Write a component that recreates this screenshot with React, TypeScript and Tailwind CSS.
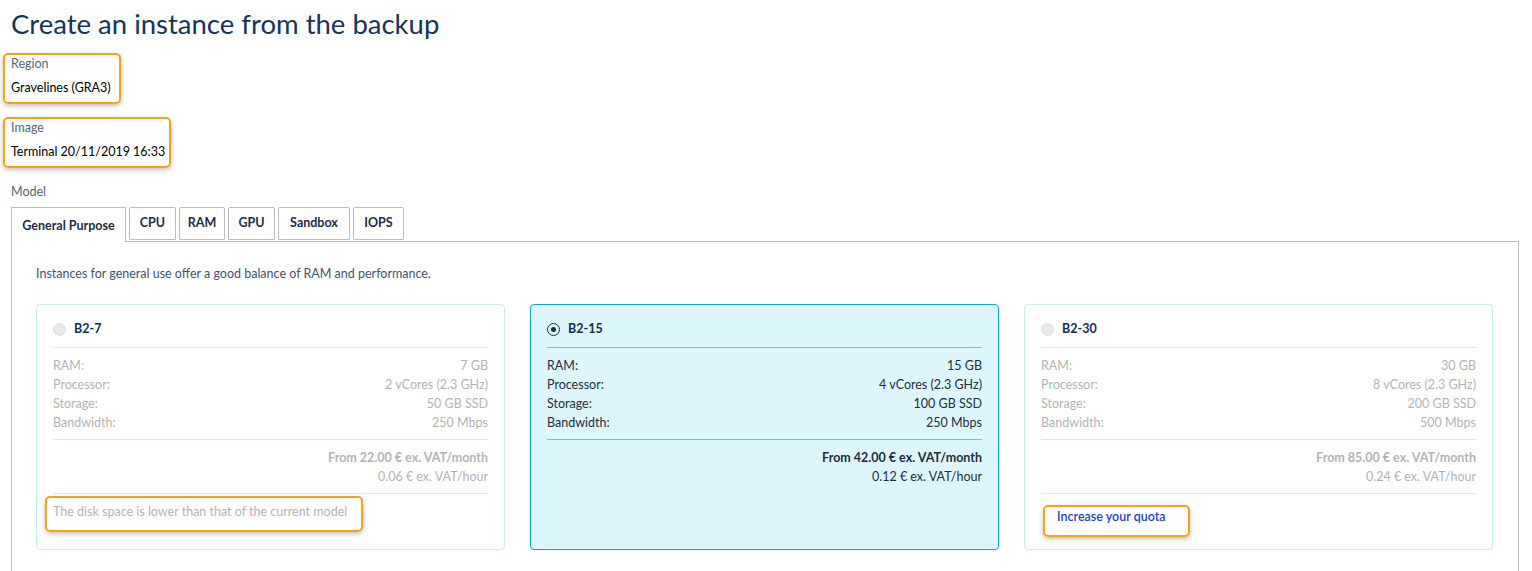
import React from 'react';

type Model = {
  name: string;
  ram: string;
  cpu: string;
  storage: string;
  bandwidth: string;
  month: string;
  hour: string;
  selected?: boolean;
  note?: 'disk' | 'quota';
};

const models: Model[] = [
  { name: 'B2-7', ram: '7 GB', cpu: '2 vCores (2.3 GHz)', storage: '50 GB SSD', bandwidth: '250 Mbps', month: 'From 22.00 € ex. VAT/month', hour: '0.06 € ex. VAT/hour', note: 'disk' },
  { name: 'B2-15', ram: '15 GB', cpu: '4 vCores (2.3 GHz)', storage: '100 GB SSD', bandwidth: '250 Mbps', month: 'From 42.00 € ex. VAT/month', hour: '0.12 € ex. VAT/hour', selected: true },
  { name: 'B2-30', ram: '30 GB', cpu: '8 vCores (2.3 GHz)', storage: '200 GB SSD', bandwidth: '500 Mbps', month: 'From 85.00 € ex. VAT/month', hour: '0.24 € ex. VAT/hour', note: 'quota' },
];

const tabs = [
  { label: 'CPU', w: 'w-[47px]' },
  { label: 'RAM', w: 'w-[46px]' },
  { label: 'GPU', w: 'w-[47px]' },
  { label: 'Sandbox', w: 'w-[72px]' },
  { label: 'IOPS', w: 'w-[51px]' },
];

const Highlight: React.FC<{ className?: string; children: React.ReactNode }> = ({ className = '', children }) => (
  <div className={`border-2 border-[#f5a31a] rounded-[5px] shadow-[0_2px_5px_rgba(0,0,0,0.25)] ${className}`}>
    {children}
  </div>
);

const ModelCard: React.FC<{ m: Model }> = ({ m }) => {
  const muted = !m.selected;
  const text = muted ? 'text-[#b3b3b3]' : 'text-[#1d2d44]';
  const line = m.selected ? 'border-[#4fcfe8]' : 'border-[#cdeef6]';
  return (
    <div
      className={`h-[246px] rounded-[4px] border px-[16px] ${
        m.selected ? 'bg-[#ddf5fc] border-[#0fa5c4]' : 'bg-white border-[#c9ecf5]'
      }`}
    >
      <div className={`flex items-center gap-[8px] h-[43px] pt-[7px] border-b ${line}`}>
        {m.selected ? (
          <span className="w-[13px] h-[13px] rounded-full border-[1.5px] border-[#1d2d44] flex items-center justify-center">
            <span className="w-[5px] h-[5px] rounded-full bg-[#1d2d44]" />
          </span>
        ) : (
          <span className="w-[13px] h-[13px] rounded-full bg-[#e8e8e8] border border-[#e0e0e0]" />
        )}
        <span className="text-[12.5px] font-bold text-[#122d4f]">{m.name}</span>
      </div>
      <div className={`pt-[8px] pb-[7px] border-b ${line} text-[12.5px] leading-[19px] ${text}`}>
        {[
          ['RAM:', m.ram],
          ['Processor:', m.cpu],
          ['Storage:', m.storage],
          ['Bandwidth:', m.bandwidth],
        ].map(([k, v]) => (
          <div key={k} className="flex justify-between">
            <span>{k}</span>
            <span>{v}</span>
          </div>
        ))}
      </div>
      <div className={`pt-[8px] pb-[7px] text-right text-[12.5px] leading-[19px] ${text} ${m.note ? `border-b ${line}` : ''}`}>
        <div className="font-bold">{m.month}</div>
        <div>{m.hour}</div>
      </div>
      {m.note === 'disk' && (
        <Highlight className="mt-[2px] -ml-[8px] w-[318px] h-[36px] pl-[6px] pt-0">
          <span className="text-[12.5px] leading-[26px] text-[#b3b3b3]">The disk space is lower than that of the current model</span>
        </Highlight>
      )}
      {m.note === 'quota' && (
        <Highlight className="mt-[11px] ml-[2px] w-[147px] h-[32px] pl-[12px] pt-0">
          <span className="block text-[12.5px] leading-[20px] font-semibold text-[#2346c0]">Increase your quota</span>
        </Highlight>
      )}
    </div>
  );
};

export default function App() {
  return (
    <div className="min-h-screen bg-white pl-[11px] pr-[13px] pt-[6px] text-[#1d2d44]" style={{ fontFamily: 'Lato, "Open Sans", sans-serif' }}>
      <h1 className="text-[27.5px] leading-[36px] font-normal text-[#173459]">Create an instance from the backup</h1>

      <Highlight className="mt-[11px] -ml-[8px] w-[118px] h-[51px] pl-[6px] pt-0">
        <div className="text-[12.5px] leading-[18px] text-[#56647a]">Region</div>
        <div className="mt-[6px] text-[12.5px] leading-[18px] text-black">Gravelines (GRA3)</div>
      </Highlight>

      <Highlight className="mt-[13px] -ml-[8px] w-[168px] h-[51px] pl-[6px] pt-0">
        <div className="text-[12.5px] leading-[18px] text-[#56647a]">Image</div>
        <div className="mt-[6px] text-[12.5px] leading-[18px] text-black">Terminal 20/11/2019 16:33</div>
      </Highlight>

      <div className="mt-[15px] text-[12.5px] leading-[18px] text-[#56647a]">Model</div>

      <div className="mt-[6px] flex items-end gap-[3px] relative z-10">
        <div className="h-[35px] w-[115px] flex justify-center pt-[9px] border border-b-0 border-[#bdbdbd] bg-white text-[12.5px] font-bold text-[#1d2d44] -mb-px">
          General Purpose
        </div>
        {tabs.map((t) => (
          <div key={t.label} className={`h-[33px] ${t.w} flex items-center justify-center border border-[#bdbdbd] rounded-t-[2px] text-[12.5px] font-bold text-[#1d2d44] mb-px`}>
            {t.label}
          </div>
        ))}
      </div>

      <div className="border border-[#bdbdbd] px-[24px] pt-[23px] pb-[20px] h-[340px]">
        <p className="text-[12.5px] leading-[18px] text-[#42546b]">
          Instances for general use offer a good balance of RAM and performance.
        </p>
        <div className="mt-[21px] grid grid-cols-3 gap-[25px] w-[1457px]">
          {models.map((m) => (
            <ModelCard key={m.name} m={m} />
          ))}
        </div>
      </div>
    </div>
  );
}
